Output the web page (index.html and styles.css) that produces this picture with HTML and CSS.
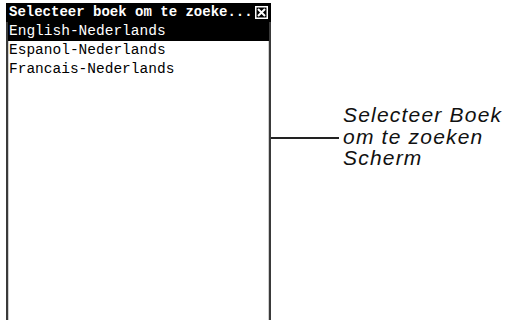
FILE: index.html
```html
<!DOCTYPE html>
<html lang="nl">
<head>
  <meta charset="UTF-8">
  <title>Selecteer boek</title>
  <link rel="stylesheet" href="styles.css">
</head>
<body>
  <div class="scherm">
    <div class="venster">
      <div class="titel">
        <span>Selecteer boek om te zoeke...</span>
        <span class="sluit">
          <svg width="13" height="13" viewBox="0 0 13 13">
            <rect x="0.5" y="0.5" width="12" height="12" fill="#fff" stroke="#fff"/>
            <rect x="1.5" y="1.5" width="10" height="10" fill="#000"/>
            <path d="M3 3 L10 10 M10 3 L3 10" stroke="#fff" stroke-width="2"/>
          </svg>
        </span>
      </div>
      <ul class="lijst">
        <li class="gekozen">English-Nederlands</li>
        <li>Espanol-Nederlands</li>
        <li>Francais-Nederlands</li>
      </ul>
    </div>
    <div class="uitleg">
      <div class="streep"></div>
      <p>Selecteer Boek<br>om te zoeken<br>Scherm</p>
    </div>
  </div>
</body>
</html>
```

FILE: styles.css
```css
body {
  margin: 0;
  background: #fff;
  font-family: "Liberation Mono", monospace;
}
.scherm {
  display: flex;
  align-items: flex-start;
  height: 320px;
  overflow: hidden;
}
.venster {
  margin-left: 6px;
  margin-top: 3px;
  width: 265px;
  height: 330px;
  display: flex;
  flex-direction: column;
}
.titel {
  background: #000;
  color: #fff;
  font-weight: bold;
  font-size: 14px;
  height: 19px;
  line-height: 19px;
  padding: 0 3px 0 3px;
  display: flex;
  justify-content: space-between;
  align-items: center;
}
.sluit svg {
  display: block;
}
.lijst {
  flex: 1;
  list-style: none;
  margin: 0;
  padding: 0;
  border-left: 2px solid #3a3a3a;
  border-right: 2px solid #3a3a3a;
  box-shadow: inset 1px 0 0 #cfcfcf, inset -1px 0 0 #cfcfcf;
  font-size: 14.5px;
}
.lijst li {
  height: 19px;
  line-height: 19px;
  padding-left: 1px;
}
.lijst .gekozen {
  background: #000;
  color: #fff;
}
.uitleg {
  display: flex;
  align-items: flex-start;
  margin-top: 104px;
}
.streep {
  width: 68px;
  height: 2px;
  margin-top: 33px;
  background: #222;
}
.uitleg p {
  margin: 0 0 0 4px;
  font-family: "Liberation Sans", Arial, sans-serif;
  font-style: italic;
  font-size: 21px;
  letter-spacing: 1.2px;
  line-height: 21.5px;
  color: #111;
}
```
